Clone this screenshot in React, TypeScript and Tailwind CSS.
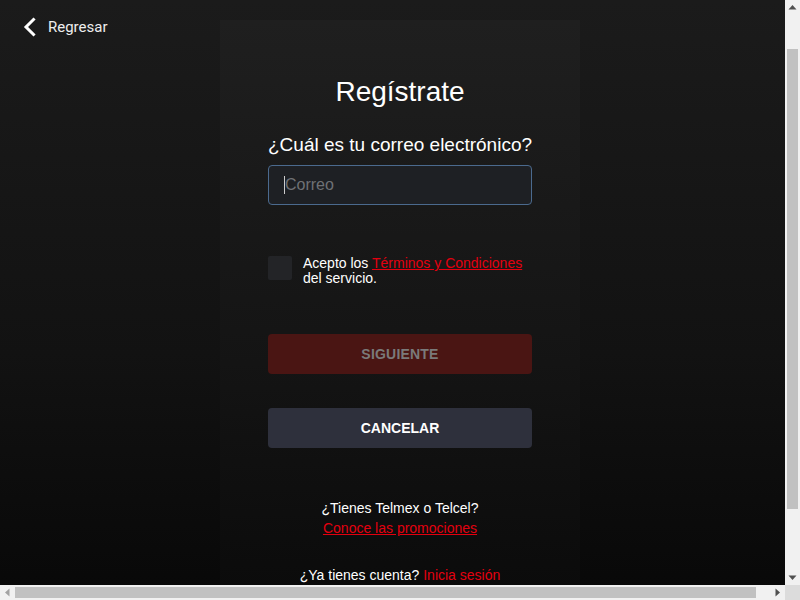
import React from "react";

function ScrollBars() {
  return (
    <>
      <div className="fixed right-0 top-0 w-[15px] h-[585px] bg-[#f1f1f1]">
        <svg className="absolute left-0 top-0" width="15" height="15" viewBox="0 0 15 15">
          <path d="M3.5 9.5 L7.5 5 L11.5 9.5 Z" fill="#505050" />
        </svg>
        <div className="absolute left-[2px] top-[49px] w-[11px] h-[460px] bg-[#c1c1c1]" />
        <svg className="absolute left-0 bottom-0" width="15" height="15" viewBox="0 0 15 15">
          <path d="M3.5 5.5 L7.5 10 L11.5 5.5 Z" fill="#505050" />
        </svg>
      </div>
      <div className="fixed left-0 bottom-0 w-[785px] h-[15px] bg-[#f1f1f1]">
        <svg className="absolute left-0 top-0" width="15" height="15" viewBox="0 0 15 15">
          <path d="M9.5 3.5 L5 7.5 L9.5 11.5 Z" fill="#a3a3a3" />
        </svg>
        <div className="absolute left-[15px] top-[2px] w-[741px] h-[11px] bg-[#c1c1c1]" />
        <svg className="absolute right-0 top-0" width="15" height="15" viewBox="0 0 15 15">
          <path d="M5.5 3.5 L10 7.5 L5.5 11.5 Z" fill="#505050" />
        </svg>
      </div>
      <div className="fixed right-0 bottom-0 w-[15px] h-[15px] bg-[#dcdcdc]" />
    </>
  );
}

export default function App() {
  return (
    <div
      className="relative w-screen min-h-[706px] bg-gradient-to-b from-[#1b1b1b] via-[#121212] to-[#050505] text-white"
      style={{ fontFamily: '"Liberation Sans", Arial, sans-serif' }}
    >
      <div
        className="absolute left-[22px] top-[16px] flex items-center gap-[10px] text-[15px] text-[#eeeeee]"
        style={{ fontFamily: "Roboto, sans-serif" }}
      >
        <svg width="16" height="20" viewBox="0 0 16 20" fill="none">
          <path d="M11.5 2.5 L4 10 L11.5 17.5" stroke="white" strokeWidth="3" strokeLinecap="square" />
        </svg>
        <span>Regresar</span>
      </div>

      <div className="mx-auto w-[360px] pt-[20px]">
        <div className="bg-gradient-to-b from-[#1f1f1f] via-[#141414] to-[#070707] px-12 pt-[56px] pb-[120px] flex flex-col">
          <h1 className="text-center text-[28px] leading-[32px] text-white">Regístrate</h1>
          <div className="mt-[25px] text-center text-[19px] leading-[24px] text-white">
            ¿Cuál es tu correo electrónico?
          </div>
          <div className="mt-[8px] h-[40px] rounded-[4px] border border-[#4b6a8e] bg-[#1e2024] flex items-center px-[15px]">
            <span className="w-px h-[18px] bg-[#cccccc]" />
            <span className="text-[16px] text-[#6f7175]">Correo</span>
          </div>
          <div className="mt-[51px] flex items-start gap-[11px]">
            <div className="w-[24px] h-[24px] rounded-[2px] bg-[#232427] shrink-0" />
            <div className="text-[14px] leading-[15px] text-white">
              Acepto los{" "}
              <span className="text-[#e3000f] underline">Términos y Condiciones</span>
              <br />
              del servicio.
            </div>
          </div>
          <button className="mt-[48px] h-[40px] rounded-[4px] bg-[#4a1513] text-[14px] font-bold text-[#7a7a7a] tracking-[0.2px]">
            SIGUIENTE
          </button>
          <button className="mt-[34px] h-[40px] rounded-[4px] bg-[#2e303c] text-[14px] font-bold text-white">
            CANCELAR
          </button>
          <div className="mt-[50px] text-center text-[14px] leading-[20px]">
            <div className="text-white">¿Tienes Telmex o Telcel?</div>
            <div className="text-[#e3000f] underline">Conoce las promociones</div>
          </div>
          <div className="mt-[27px] text-center text-[14px] leading-[20px]">
            <span className="text-white">¿Ya tienes cuenta? </span>
            <span className="text-[#e3000f]">Inicia sesión</span>
          </div>
        </div>
      </div>
      <ScrollBars />
    </div>
  );
}
